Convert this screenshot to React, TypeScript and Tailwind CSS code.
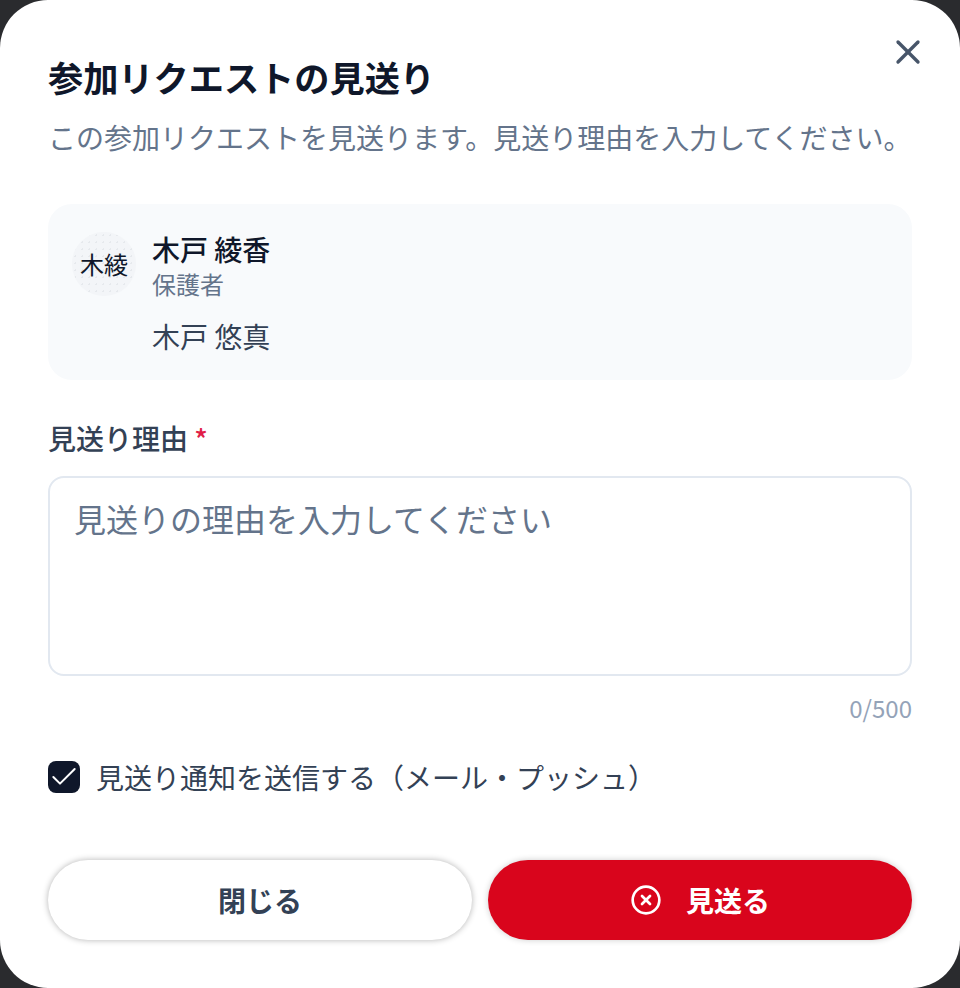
import { X, CircleX, Check } from 'lucide-react'

const font = { fontFamily: '"Noto Sans CJK JP", sans-serif' }

export default function App() {
  return (
    <div className="h-[988px] w-[960px] overflow-hidden bg-[#2a2b2e]" style={font}>
      <div className="relative flex h-full flex-col rounded-[48px] bg-white px-12 pt-[51px]">
        <button className="absolute right-[32px] top-[32px] text-[#475569]">
          <X className="h-10 w-10" strokeWidth={2} />
        </button>

        <h2 className="text-[35.2px] leading-[52px] font-bold text-[#0f172a]">参加リクエストの見送り</h2>
        <p className="mt-[14px] text-[28px] leading-[40px] text-[#64748b]">
          この参加リクエストを見送ります。見送り理由を入力してください。
        </p>

        <div className="mt-[47px] flex h-[176px] gap-4 rounded-[24px] bg-[#f8fafc] px-6 pt-7">
          <div className="flex h-16 w-16 shrink-0 items-center justify-center rounded-full bg-[#f3f5f8] bg-[radial-gradient(#e6e9ed_1px,transparent_1px)] bg-[length:7px_7px] text-[24px] text-[#0f172a]">
            木綾
          </div>
          <div>
            <div className="text-[28px] leading-[34px] font-medium text-[#0f172a]">木戸 綾香</div>
            <div className="mt-[2px] text-[24px] leading-[32px] text-[#64748b]">保護者</div>
            <div className="mt-[16px] text-[28px] leading-[40px] text-[#334155]">木戸 悠真</div>
          </div>
        </div>

        <label className="mt-[38px] text-[28px] leading-[40px] font-medium text-[#334155]">
          見送り理由 <span className="text-[#e11d48]">*</span>
        </label>
        <div className="mt-[18px] h-[200px] rounded-[16px] border-2 border-[#e2e8f0] px-6 py-[16px] text-[32px] leading-[48px] text-[#64748b]">
          見送りの理由を入力してください
        </div>
        <div className="mt-[14px] text-right text-[24px] leading-[36px] text-[#94a3b8]">0/500</div>

        <div className="mt-[31px] flex items-center gap-4">
          <div className="flex h-8 w-8 items-center justify-center rounded-[8px] bg-[#0f172a] text-white">
            <Check className="h-8 w-8" strokeWidth={1.5} />
          </div>
          <span className="text-[28px] leading-[40px] text-[#334155]">見送り通知を送信する（メール・プッシュ）</span>
        </div>

        <div className="mt-[63px] flex gap-4">
          <button className="flex h-20 flex-1 items-center justify-center rounded-full bg-white text-[28px] font-bold text-[#334155] shadow-[0_0_6px_rgba(0,0,0,0.3)]">
            閉じる
          </button>
          <button className="flex h-20 flex-1 items-center justify-center gap-6 rounded-full bg-[#d9051c] text-[28px] font-bold text-white shadow-[0_0_6px_rgba(0,0,0,0.2)]">
            <CircleX className="h-8 w-8" strokeWidth={2} />
            見送る
          </button>
        </div>
      </div>
    </div>
  )
}
